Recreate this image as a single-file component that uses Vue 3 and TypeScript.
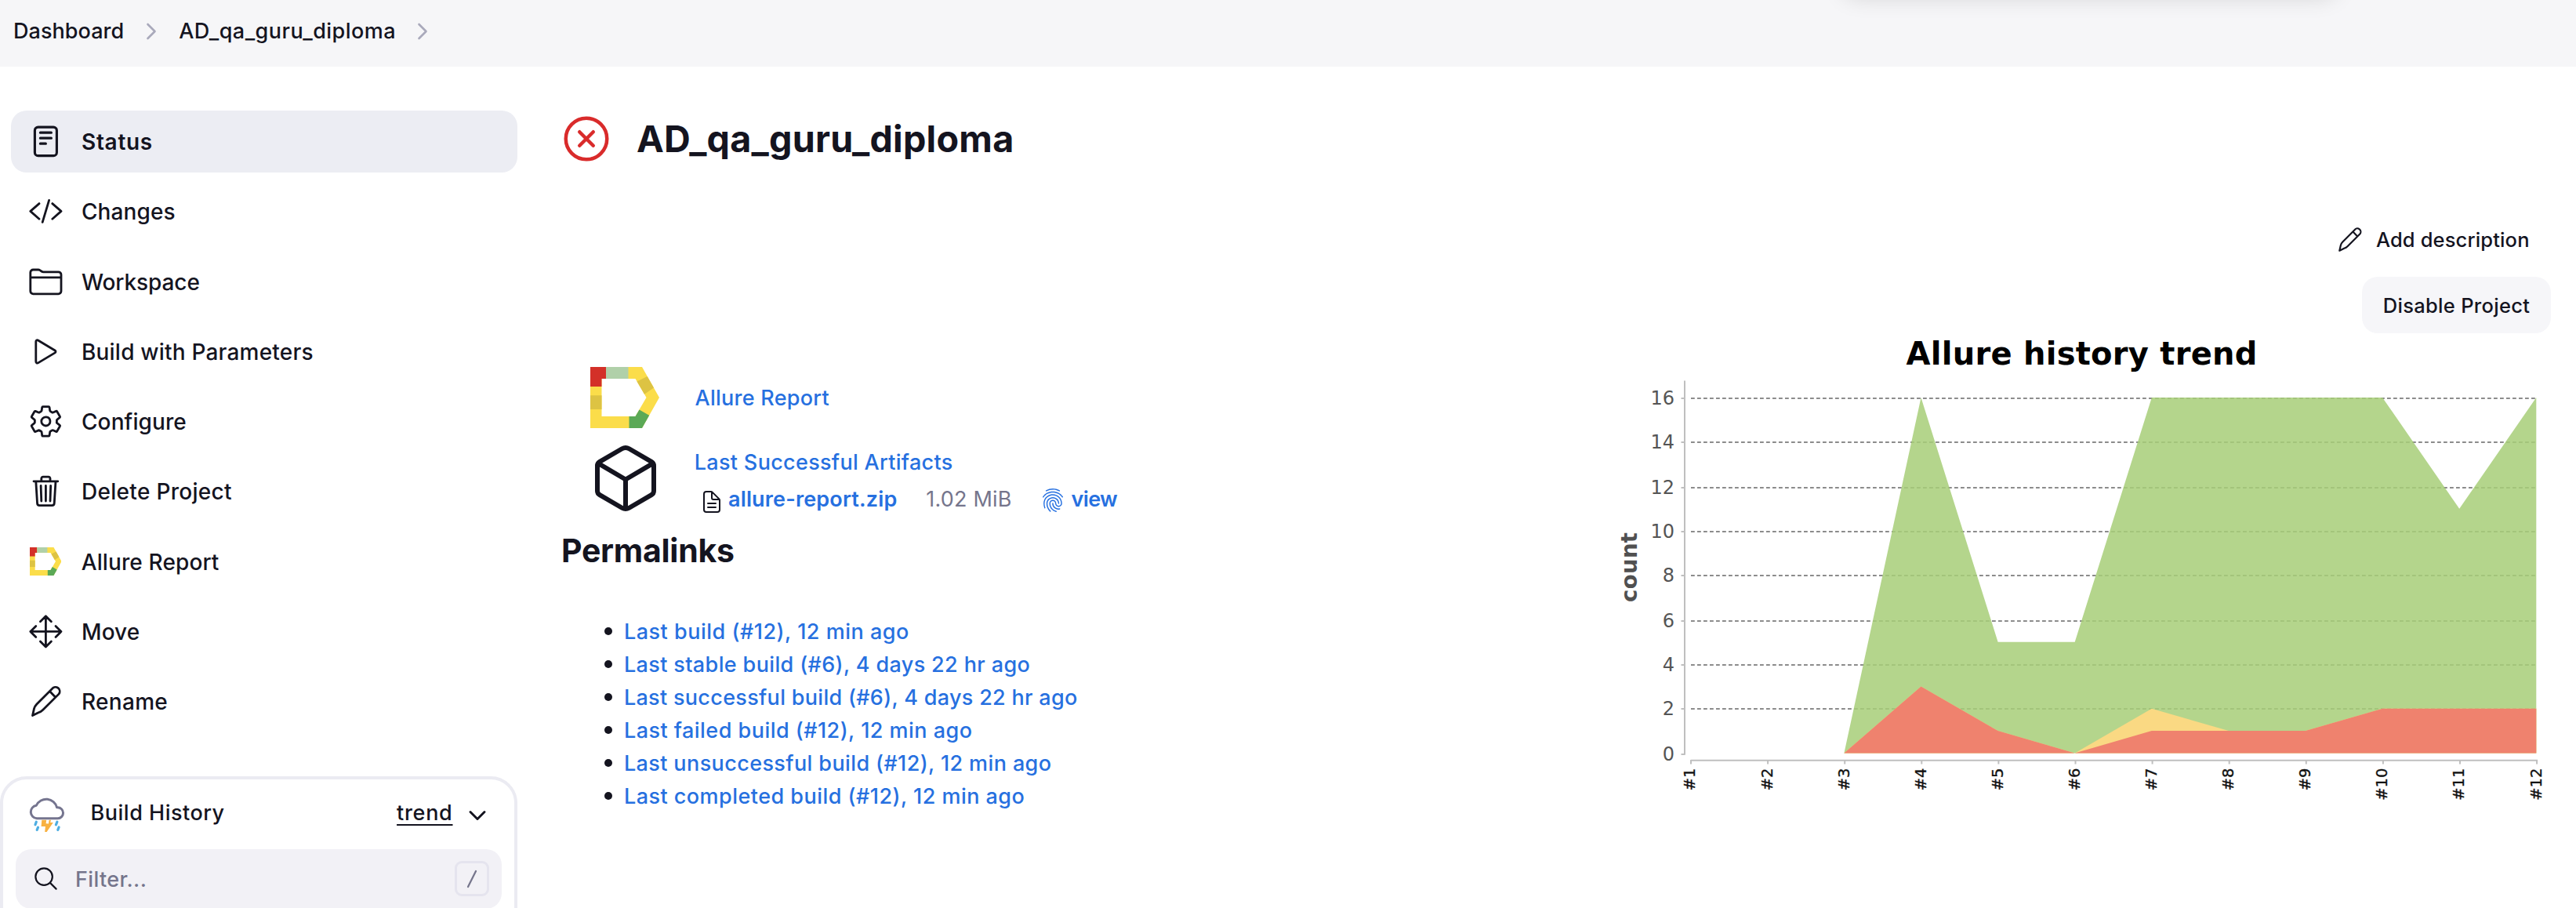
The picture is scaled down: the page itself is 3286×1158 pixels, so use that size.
<script setup lang="ts">
interface Task {
  label: string
  icon: string
  tracking: number
  active?: boolean
}

interface Permalink {
  text: string
  tracking: number
}

const tasks: Task[] = [
  { label: 'Status', icon: 'reader', tracking: 0.7, active: true },
  { label: 'Changes', icon: 'code', tracking: 0.1 },
  { label: 'Workspace', icon: 'folder', tracking: -0.1 },
  { label: 'Build with Parameters', icon: 'play', tracking: 0.2 },
  { label: 'Configure', icon: 'gear', tracking: 0.1 },
  { label: 'Delete Project', icon: 'trash', tracking: 0.3 },
  { label: 'Allure Report', icon: 'allure', tracking: 0.12 },
  { label: 'Move', icon: 'move', tracking: 0.1 },
  { label: 'Rename', icon: 'pencil', tracking: 0.3 },
]

const strokes: Record<string, string[]> = {
  reader: [
    'M144 48h224a48 48 0 0148 48v320a48 48 0 01-48 48H144a48 48 0 01-48-48V96a48 48 0 0148-48z',
    'M176 128h160M176 208h160M176 288h80',
  ],
  code: ['M160 368L32 256l128-112M352 368l128-112-128-112M304 96l-96 320'],
  folder: [
    'M440 432H72a40 40 0 01-40-40V120a40 40 0 0140-40h75.89a40 40 0 0122.19 6.72l27.84 18.56a40 40 0 0022.19 6.72H440a40 40 0 0140 40v240a40 40 0 01-40 40zM32 192h448',
  ],
  play: ['M112 111v290c0 17.44 17 28.52 31 20.16l247.9-148.37c12.12-7.25 12.12-26.33 0-33.58L143 90.84c-14-8.36-31 2.72-31 20.16z'],
  gear: [
    'M262.29 192.31a64 64 0 1057.4 57.4 64.13 64.13 0 00-57.4-57.4zM416.39 256a154.34 154.34 0 01-1.53 20.79l45.21 35.46a10.81 10.81 0 012.45 13.75l-42.77 74a10.81 10.81 0 01-13.14 4.59l-44.9-18.08a16.11 16.11 0 00-15.17 1.75A164.48 164.48 0 01325 400.8a15.94 15.94 0 00-8.82 12.14l-6.73 47.89a11.08 11.08 0 01-10.68 9.17h-85.54a11.11 11.11 0 01-10.69-8.87l-6.72-47.82a16.07 16.07 0 00-9-12.22 155.3 155.3 0 01-21.46-12.57 16 16 0 00-15.11-1.71l-44.89 18.07a10.81 10.81 0 01-13.14-4.58l-42.77-74a10.8 10.8 0 012.45-13.75l38.21-30a16.05 16.05 0 006-14.08c-.36-4.17-.58-8.33-.58-12.5s.21-8.27.58-12.35a16 16 0 00-6.07-13.94l-38.19-30A10.81 10.81 0 0149.48 186l42.77-74a10.81 10.81 0 0113.14-4.59l44.9 18.08a16.11 16.11 0 0015.17-1.75A164.48 164.48 0 01187 111.2a15.94 15.94 0 008.82-12.14l6.73-47.89A11.08 11.08 0 01213.23 42h85.54a11.11 11.11 0 0110.69 8.87l6.72 47.82a16.07 16.07 0 009 12.22 155.3 155.3 0 0121.46 12.57 16 16 0 0015.11 1.71l44.89-18.07a10.81 10.81 0 0113.14 4.58l42.77 74a10.8 10.8 0 01-2.45 13.75l-38.21 30a16.05 16.05 0 00-6.05 14.08c.33 4.14.55 8.3.55 12.47z',
  ],
  trash: [
    'M112 112l20 320c.95 18.49 14.4 32 32 32h184c17.67 0 30.87-13.51 32-32l20-320M80 112h352M192 112V72a23.93 23.93 0 0124-24h80a23.93 23.93 0 0124 24v40M256 176v224M184 176l8 224M328 176l-8 224',
  ],
  move: ['M176 112l80-80 80 80M256 32v448M176 400l80 80 80-80M400 176l80 80-80 80M112 176l-80 80 80 80M32 256h448'],
  pencil: [
    'M63 464L86 362Q94 328 122 299L348 73A54 54 0 01446 150L212 384Q188 409 150 420L63 464zM318 114L398 197',
  ],
}

const permalinks: Permalink[] = [
  { text: 'Last build (#12), 12 min ago', tracking: 0.51 },
  { text: 'Last stable build (#6), 4 days 22 hr ago', tracking: 0.37 },
  { text: 'Last successful build (#6), 4 days 22 hr ago', tracking: 0.31 },
  { text: 'Last failed build (#12), 12 min ago', tracking: 0.47 },
  { text: 'Last unsuccessful build (#12), 12 min ago', tracking: 0.39 },
  { text: 'Last completed build (#12), 12 min ago', tracking: 0.47 },
]

// Chart geometry, in the SVG's own pixels
const left = 117
const step = 98.1
const base = 535.4
const unit = 28.34
const px = (i: number): number => left + i * step
const py = (v: number): number => base - v * unit

const failed = [0, 0, 0, 3, 1, 0, 1, 1, 1, 2, 2, 2]
const broken = [0, 0, 0, 3, 1, 0, 2, 1, 1, 2, 2, 2]
const passed = [0, 0, 0, 16, 5, 5, 16, 16, 16, 16, 11, 16]

const area = (values: number[]): string =>
  'M' +
  values
    .map((v, i) => ({ v, i }))
    .slice(2)
    .map(({ v, i }) => `${(px(i) - 0.8).toFixed(1)} ${py(v).toFixed(1)}`)
    .join('L') +
  `V${base}H${(px(2) - 0.8).toFixed(1)}Z`

const grid = [
  { v: 16, y: 83 },
  { v: 14, y: 139 },
  { v: 12, y: 197 },
  { v: 10, y: 253 },
  { v: 8, y: 309 },
  { v: 6, y: 367 },
  { v: 4, y: 423 },
  { v: 2, y: 479 },
  { v: 0, y: 537 },
]
</script>

<template>
  <div class="page">
    <div class="floating" aria-hidden="true"></div>
    <header class="crumbs">
      <a class="crumb-home">Dashboard</a>
      <svg class="crumb-arrow" viewBox="0 0 512 512"><path d="M184 112l144 144-144 144" /></svg>
      <a class="crumb-job">AD_qa_guru_diploma</a>
      <svg class="crumb-arrow" viewBox="0 0 512 512"><path d="M184 112l144 144-144 144" /></svg>
    </header>

    <div class="body">
      <aside class="side">
        <nav class="tasks">
          <a v-for="t in tasks" :key="t.label" class="task" :class="{ active: t.active }">
            <svg v-if="t.icon === 'allure'" class="logo-small" viewBox="0 0 88 78">
              <path fill="#fbdd4a" fill-rule="evenodd" d="M0 0H66L88 39 66 78H0zM14.5 15V63H57.5L71.5 39 57.5 15z" />
              <path fill="#d33028" d="M0 0H20V15H14.5V25H0z" />
              <path fill="#b0d0a9" d="M20 0H48.5V15H20z" />
              <path fill="#ddc343" d="M0 36.3H14.5V54H0zM72.7 12L81 26.6 69 34.7 59.5 18.5z" />
              <path fill="#5ba956" d="M49.5 63H57.5L62.5 54.4 75.2 61.7 66 78H49.5z" />
            </svg>
            <svg v-else class="icon" viewBox="0 0 512 512">
              <path v-for="d in strokes[t.icon]" :key="d" :d="d" />
            </svg>
            <span class="task-label" :style="{ letterSpacing: t.tracking + 'px' }">{{ t.label }}</span>
          </a>
        </nav>

        <section class="history">
          <div class="history-head">
            <svg class="weather" viewBox="0 0 52 52">
              <path
                class="cloud"
                d="M13 31.7a8.3 8.3 0 0 1-.6-16.5A14 14 0 0 1 38.6 17.8h.9a6.95 6.95 0 0 1 .2 13.9z"
              />
              <path class="rain" d="M12.3 36.2L11 39.8M14.5 43.2L13.2 46.4M38.9 36.2L37.4 39.8M41.1 43L39.8 46.4" />
              <path
                fill="#f8b141"
                d="M19.3 33.7H25.2L24.6 38.2 28 38.4 28.6 33.7H31L30.2 37.1H33.8L25.6 49H23.2L23.9 42H18.6z"
              />
            </svg>
            <span class="history-title">Build History</span>
            <a class="trend">trend</a>
            <svg class="collapse" viewBox="0 0 512 512"><path d="M112 184l144 144 144-144" /></svg>
          </div>
          <div class="filter">
            <svg class="search" viewBox="0 0 512 512">
              <path d="M221.09 64a157.09 157.09 0 10157.09 157.09A157.1 157.1 0 00221.09 64zM338.29 338.29L448 448" />
            </svg>
            <span class="placeholder">Filter...</span>
            <kbd class="key">
              <svg viewBox="0 0 14 24"><path d="M12 2L2 22" /></svg>
            </kbd>
          </div>
        </section>
      </aside>

      <main class="main">
        <div class="title-row">
          <svg class="status" viewBox="0 0 512 512">
            <path d="M448 256c0-106-86-192-192-192S64 150 64 256s86 192 192 192 192-86 192-192z" />
            <path d="M320 320L192 192M192 320l128-128" />
          </svg>
          <h1>AD_qa_guru_diploma</h1>
        </div>

        <div class="columns">
          <div class="left">
            <div class="entry">
              <svg class="logo" viewBox="0 0 88 78">
                <path fill="#fbdd4a" fill-rule="evenodd" d="M0 0H66L88 39 66 78H0zM14.5 15V63H57.5L71.5 39 57.5 15z" />
                <path fill="#d33028" d="M0 0H20V15H14.5V25H0z" />
                <path fill="#b0d0a9" d="M20 0H48.5V15H20z" />
                <path fill="#ddc343" d="M0 36.3H14.5V54H0zM72.7 12L81 26.6 69 34.7 59.5 18.5z" />
                <path fill="#5ba956" d="M49.5 63H57.5L62.5 54.4 75.2 61.7 66 78H49.5z" />
              </svg>
              <a class="link report">Allure Report</a>
            </div>
            <div class="entry artifacts">
              <svg class="cube" viewBox="0 0 512 512">
                <path
                  d="M448 341.37V170.61A32 32 0 00432.11 143l-152-88.46a47.94 47.94 0 00-48.24 0L79.89 143A32 32 0 0064 170.61v170.76A32 32 0 0079.89 369l152 88.46a48 48 0 0048.24 0l152-88.46A32 32 0 00448 341.37zM69 153.99l187 110 187-110M256 463.99v-200"
                />
              </svg>
              <div class="artifact-text">
                <a class="link artifact-title">Last Successful Artifacts</a>
                <div class="file">
                  <svg class="doc" viewBox="0 0 512 512">
                    <path
                      d="M416 221.25V416a48 48 0 01-48 48H144a48 48 0 01-48-48V96a48 48 0 0148-48h98.75a32 32 0 0122.62 9.37l141.26 141.26a32 32 0 019.37 22.62zM256 56v120a32 32 0 0032 32h120M176 288h160M176 368h160"
                    />
                  </svg>
                  <a class="link file-name">allure-report.zip</a>
                  <span class="size">1.02 MiB</span>
                  <svg class="print" viewBox="0 0 512 512">
                    <path
                      d="M390.42 75.28a10.45 10.45 0 01-5.32-1.44C340.72 50.08 302.35 40 256.35 40c-45.77 0-89.23 11.28-128.76 33.84C122 77 115.11 74.8 111.87 69a12.4 12.4 0 014.63-16.32A281.81 281.81 0 01256.35 16c49.23 0 92.23 11.28 139.39 36.48a12 12 0 014.85 16.08 11.3 11.3 0 01-10.17 6.72zm-330.79 126a11.73 11.73 0 01-6.7-2.16 12.26 12.26 0 01-2.78-16.8c22.89-33.6 52-60 86.69-78.48 72.58-38.84 165.51-39.12 238.32-.24 34.68 18.48 63.8 44.64 86.69 78a12.29 12.29 0 01-2.78 16.8 11.26 11.26 0 01-16.18-2.88c-20.8-30.24-47.15-54-78.36-70.56-66.34-35.28-151.18-35.28-217.29.24-31.44 16.8-57.79 40.8-78.59 71.04a10 10 0 01-9.02 5.04zM204.1 491a10.66 10.66 0 01-8.09-3.6C175.9 466.48 165 453 149.55 424c-16-29.52-24.27-65.52-24.27-104.16 0-71.28 58.94-129.36 131.06-129.36S387.4 248.56 387.4 319.84a11.56 11.56 0 11-23.11 0c0-58.08-48.32-105.36-107.72-105.36S148.85 261.76 148.85 319.84c0 34.56 7.4 66.48 21.49 92.4 14.8 27.6 25 39.36 42.77 58.08a12.67 12.67 0 010 17 12.44 12.44 0 01-9.01 3.68zm165.75-44.4c-27.51 0-51.78-7.2-71.66-21.36a129.1 129.1 0 01-55-105.36 11.57 11.57 0 1123.12 0 104.28 104.28 0 0044.84 85.44c16.41 11.52 35.6 17 58.72 17a147.41 147.41 0 0024-2.4c6.24-1.2 12.25 3.12 13.4 9.84a11.92 11.92 0 01-9.47 13.92 152.28 152.28 0 01-27.95 2.92zM323.38 496a13 13 0 01-3-.48c-36.76-10.56-60.8-24.72-86-50.4-32.37-33.36-50.16-77.76-50.16-125.28 0-38.88 31.9-70.56 71.19-70.56s71.2 31.68 71.2 70.56c0 25.68 21.5 46.56 48.08 46.56s48.08-20.88 48.08-46.56c0-90.48-75.13-163.92-167.59-163.92-65.65 0-125.75 37.92-152.79 96.72-9 19.44-13.64 42.24-13.64 67.2 0 18.72 1.61 48.24 15.48 86.64 2.32 6.24-.69 13.2-6.7 15.36a11.34 11.34 0 01-14.79-7 276.39 276.39 0 01-16.88-95c0-28.8 5.32-55 15.72-77.76 30.75-67 98.94-110.4 173.6-110.4 105.18 0 190.71 84.24 190.71 187.92 0 38.88-31.9 70.56-71.2 70.56s-71.2-31.68-71.2-70.56C303.5 293.92 282 273 255.42 273s-48.08 20.88-48.08 46.56c0 41 15.26 79.44 43.23 108.24 22 22.56 43 35 75.59 44.16 6.24 1.68 9.94 8.4 8.32 14.64a11.39 11.39 0 01-11.1 9.4z"
                    />
                  </svg>
                  <a class="link view">view</a>
                </div>
              </div>
            </div>

            <h2>Permalinks</h2>
            <ul>
              <li v-for="p in permalinks" :key="p.text">
                <a class="link" :style="{ letterSpacing: p.tracking + 'px' }">{{ p.text }}</a>
              </li>
            </ul>
          </div>

          <div class="right">
            <a class="describe">
              <svg class="icon-pencil" viewBox="0 0 512 512"><path :d="strokes.pencil[0]" /></svg>
              <span>Add description</span>
            </a>
            <button class="disable" type="button">Disable Project</button>
            <svg class="chart" width="1214" height="640" viewBox="0 0 1214 640">
              <text class="chart-title" x="391.5" y="39.5" textLength="448">Allure history trend</text>
              <text class="count" transform="translate(48.2 343) rotate(-90)" textLength="89">count</text>
              <g v-for="g in grid" :key="g.v">
                <line class="tick" x1="104.5" x2="109" :y1="g.y" :y2="g.y" />
                <line v-if="g.v > 0" class="dash" :x1="left" :x2="1196" :y1="g.y" :y2="g.y" />
                <text class="num" x="96" :y="g.y + 7.6">{{ g.v }}</text>
              </g>
              <path class="tick" d="M109 60.5V537.8" />
              <path :d="area(passed)" fill="#a7ce78" fill-opacity=".85" />
              <path :d="area(broken)" fill="#fad983" />
              <path :d="area(failed)" fill="#ef826e" />
              <path class="tick" :d="`M${left} 544.8H1197`" />
              <g v-for="n in 12" :key="n">
                <line class="tick" :x1="px(n - 1)" :x2="px(n - 1)" y1="544" y2="549.5" />
                <text class="build" :transform="`translate(${px(n - 1) + 5.4} 554.6) rotate(-90)`">#{{ n }}</text>
              </g>
            </svg>
          </div>
        </div>
      </main>
    </div>
  </div>
</template>

<style>
body {
  background: #fff;
}
</style>

<style scoped>
.page {
  position: relative;
  box-sizing: border-box;
  width: 3286px;
  height: 1158px;
  overflow: hidden;
  display: flex;
  flex-direction: column;
  background: #fff;
  color: #14141f;
  font-family: Inter, 'Liberation Sans', sans-serif;
  font-size: 27px;
  font-weight: 500;
}
/* Menu that hangs just above the window edge; only its shadow shows */
.floating {
  position: absolute;
  left: 2350px;
  top: -62px;
  width: 632px;
  height: 56px;
  border-radius: 20px;
  box-shadow: 0 4px 28px rgba(0, 0, 0, 0.13);
}
svg path,
svg line {
  stroke-linecap: round;
  stroke-linejoin: round;
}
.crumbs {
  flex: none;
  display: flex;
  align-items: center;
  height: 85px;
  box-sizing: border-box;
  padding: 0 0 6px 17px;
  background: #f6f6f8;
}
.crumb-home {
  letter-spacing: 0.05px;
}
.crumb-job {
  letter-spacing: 0.46px;
}
.crumb-arrow {
  width: 32px;
  height: 32px;
  margin: 0 19.5px 0 18.5px;
  fill: none;
  stroke: #a9a9bb;
  stroke-width: 42;
}
.body {
  flex: 1;
  display: flex;
  min-height: 0;
}
.side {
  flex: none;
  width: 660px;
  display: flex;
  flex-direction: column;
}
.tasks {
  display: flex;
  flex-direction: column;
  gap: 10px;
  padding: 55.8px 0 0 14px;
}
.task {
  flex: none;
  display: flex;
  align-items: center;
  height: 79.25px;
  border-radius: 20px;
  padding-left: 21.6px;
  font-size: 28px;
}
.task-label {
  padding-top: 1.6px;
}
.task.active {
  background: #ecedf3;
  font-weight: 600;
}
.icon {
  width: 44.8px;
  height: 44.8px;
  margin-right: 23.6px;
  fill: none;
  stroke: currentColor;
  stroke-width: 32;
}
.task.active .icon {
  stroke-width: 36;
}
.logo-small {
  width: 40.6px;
  height: 36px;
  margin: 0 25.4px 0 2.1px;
}
.history {
  flex: none;
  box-sizing: border-box;
  height: 220px;
  margin-top: 55.9px;
  border: 4px solid #ebebf2;
  border-radius: 34px;
  padding: 0 16px;
}
.history-head {
  display: flex;
  align-items: center;
  height: 89px;
  padding: 0 14px;
}
.weather {
  width: 52px;
  height: 52px;
}
.cloud {
  fill: #fff;
  stroke: #75758f;
  stroke-width: 3;
}
.rain {
  fill: none;
  stroke: #4eaee2;
  stroke-width: 3.2;
}
.history-title {
  margin-left: 29.6px;
  padding-bottom: 3px;
  letter-spacing: 0.5px;
}
.trend {
  margin-left: auto;
  padding-bottom: 3px;
  letter-spacing: 0.7px;
  text-decoration: underline;
  text-decoration-thickness: 2px;
  text-underline-offset: 5px;
}
.collapse {
  width: 32px;
  height: 32px;
  margin: 3px 1px 0 15.5px;
  fill: none;
  stroke: currentColor;
  stroke-width: 48;
}
.filter {
  display: flex;
  align-items: center;
  box-sizing: border-box;
  height: 76px;
  border-radius: 20px;
  padding: 0 16px 0 20px;
  background: #f2f1f6;
}
.search {
  width: 35px;
  height: 35px;
  margin-left: 0.5px;
  fill: none;
  stroke: currentColor;
  stroke-width: 32;
}
.placeholder {
  margin-left: 20.5px;
  padding-top: 2px;
  color: #75758c;
  letter-spacing: 0.35px;
}
.key {
  margin-left: auto;
  box-sizing: border-box;
  width: 44px;
  height: 45px;
  display: flex;
  align-items: center;
  justify-content: center;
  border: 3px solid #e5e4ee;
  border-radius: 9px;
}
.key svg {
  width: 14px;
  height: 24px;
  fill: none;
  stroke: #75758c;
  stroke-width: 2.2;
}
.main {
  flex: 1;
  padding: 57px 32px 0 53px;
}
.title-row {
  display: flex;
  align-items: center;
  height: 70px;
}
.status {
  width: 70px;
  height: 70px;
  fill: none;
  stroke: #d92b2b;
  stroke-width: 33;
}
h1 {
  margin: 0 0 0 29px;
  font-size: 46.7px;
  line-height: 70px;
  font-weight: 700;
  letter-spacing: 0.22px;
}
.columns {
  display: flex;
  justify-content: space-between;
}
.left {
  padding-top: 247px;
}
.link {
  color: #2670e0;
}
.entry {
  display: flex;
  align-items: center;
  height: 96px;
  padding-left: 37px;
}
.logo {
  width: 88px;
  height: 78px;
  margin: 0 45.5px 0 3px;
}
.report {
  letter-spacing: 0.26px;
}
.artifacts {
  margin-top: 7px;
}
.cube {
  width: 96px;
  height: 96px;
  margin-right: 39px;
  fill: none;
  stroke: currentColor;
  stroke-width: 32;
}
.artifact-text {
  padding-top: 6px;
}
.artifact-title {
  display: block;
  padding-left: 0.8px;
  line-height: 46px;
  letter-spacing: 0.31px;
}
.file {
  display: flex;
  align-items: center;
  height: 46px;
  padding-left: 7px;
}
.doc {
  width: 32px;
  height: 32px;
  margin: 8px 5px 0 0;
  fill: none;
  stroke: currentColor;
  stroke-width: 32;
}
.file-name {
  font-weight: 600;
  letter-spacing: 0.16px;
}
.size {
  margin-left: 36.8px;
  font-weight: 400;
  color: #75758c;
  letter-spacing: 0.2px;
}
.print {
  width: 32px;
  height: 32px;
  margin: 3px 7.4px 0 36.4px;
  fill: #2670e0;
}
.view {
  font-weight: 600;
  letter-spacing: -0.6px;
}
h2 {
  margin: 14px 0 0 3px;
  font-size: 41px;
  line-height: 60px;
  font-weight: 700;
  letter-spacing: -0.27px;
}
ul {
  list-style: none;
  margin: 52px 0 0;
  padding: 0 0 0 57.5px;
}
li {
  display: flex;
  align-items: center;
  height: 42px;
}
li::before {
  content: '';
  width: 10px;
  height: 10px;
  margin-right: 15.4px;
  border-radius: 50%;
  background: #14141f;
}
.right {
  display: flex;
  flex-direction: column;
  align-items: flex-end;
  padding-top: 57px;
}
.describe {
  display: flex;
  align-items: center;
  height: 72px;
  padding-right: 27.4px;
  font-size: 25.5px;
  letter-spacing: 0.14px;
}
.icon-pencil {
  width: 35px;
  height: 35px;
  margin-right: 16px;
  fill: none;
  stroke: currentColor;
  stroke-width: 32;
}
.disable {
  margin: 12px 0 0;
  width: 241px;
  height: 72px;
  padding: 0;
  border: 0;
  border-radius: 20px;
  background: #f6f6f9;
  color: inherit;
  font: inherit;
  font-size: 25.5px;
  letter-spacing: 0.3px;
}
.chart {
  display: block;
  overflow: visible;
}
.chart text {
  font-family: 'DejaVu Sans', sans-serif;
}
.chart-title {
  font-size: 40px;
  font-weight: 700;
  fill: #000;
}
.chart .count {
  font-size: 27.5px;
  font-weight: 700;
  fill: #505050;
}
.num {
  font-size: 24px;
  text-anchor: end;
  fill: #555;
}
.build {
  font-size: 19.5px;
  text-anchor: end;
  fill: #111;
  stroke: #111;
  stroke-width: 0.35px;
}
.chart .tick {
  fill: none;
  stroke: #bfbfbf;
  stroke-width: 2;
  stroke-linecap: butt;
}
.chart .dash {
  stroke: #8c8c8c;
  stroke-width: 2;
  stroke-dasharray: 4.8 3.2;
  stroke-linecap: butt;
}
</style>
